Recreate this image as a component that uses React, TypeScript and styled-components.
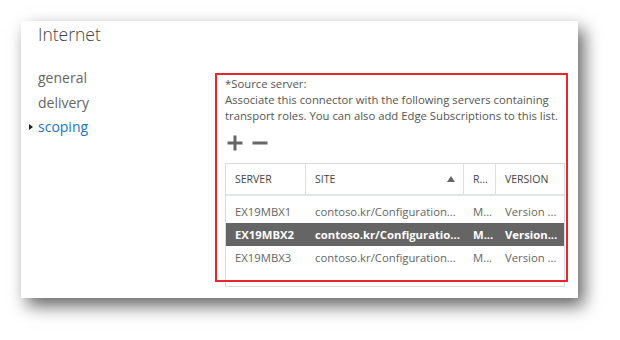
import React from "react";
import styled, { createGlobalStyle } from "styled-components";

const Global = createGlobalStyle`
  html, body { margin: 0; padding: 0; background: #ffffff; }
  body { font-family: "Open Sans", "Noto Sans", sans-serif; }
`;

const Page = styled.div`
  width: 620px;
  height: 340px;
  padding: 21px 0 0 21px;
  box-sizing: border-box;
  overflow: hidden;
`;

const Card = styled.div`
  width: 557px;
  height: 277px;
  background: #fff;
  box-shadow: 6px 8px 16px rgba(0, 0, 0, 0.6);
  padding: 1px 0 0 17px;
  box-sizing: border-box;
  display: flex;
  flex-direction: column;
`;

const Title = styled.div`
  font-size: 17.5px;
  font-weight: 300;
  line-height: 24px;
  color: #444;
`;

const Body = styled.div`
  display: flex;
  align-items: flex-start;
  margin-top: 20px;
`;

const Nav = styled.ul`
  list-style: none;
  margin: 0;
  padding: 0;
  width: 177px;
  flex: none;
`;

const NavItem = styled.li<{ $active?: boolean }>`
  position: relative;
  font-size: 14px;
  line-height: 24.5px;
  color: ${(p) => (p.$active ? "#1a74c4" : "#666")};
  &::before {
    content: "";
    display: ${(p) => (p.$active ? "block" : "none")};
    position: absolute;
    left: -9px;
    top: 9px;
    border-left: 4px solid #222;
    border-top: 3.5px solid transparent;
    border-bottom: 3.5px solid transparent;
  }
`;

const Section = styled.div`
  position: relative;
  width: 353px;
  margin-top: 7px;
  padding: 3px 0 0 10px;
  box-sizing: border-box;
  color: #555;
  font-size: 11.3px;
  line-height: 16px;
`;

const Highlight = styled.div`
  position: absolute;
  left: 0;
  top: 0;
  width: 353px;
  height: 209px;
  border: 2px solid #e8262c;
  box-sizing: border-box;
  pointer-events: none;
`;

const Para = styled.p`
  margin: 0;
`;

const Tools = styled.div`
  display: flex;
  align-items: center;
  gap: 9px;
  height: 22px;
  margin-top: 8px;
  padding-left: 2px;
`;

const Table = styled.div`
  width: 340px;
  margin-top: 9px;
  border: 1px solid #d9dcdf;
  box-sizing: border-box;
  padding-bottom: 17px;
`;

const Grid = styled.div<{ $head?: boolean; $selected?: boolean }>`
  display: grid;
  grid-template-columns: 80px 158px 32px 1fr;
  height: ${(p) => (p.$head ? "30px" : "23px")};
  align-items: center;
  background: ${(p) => (p.$selected ? "#656565" : "transparent")};
  color: ${(p) => (p.$selected ? "#fff" : p.$head ? "#444" : "#666")};
  font-weight: ${(p) => (p.$selected ? 700 : 400)};
  font-size: ${(p) => (p.$head ? "10.5px" : "11.3px")};
  border-bottom: ${(p) => (p.$head ? "2px solid #e3e6e9" : "none")};
  margin-bottom: ${(p) => (p.$head ? "4px" : "0")};
`;

const Cell = styled.div<{ $head?: boolean }>`
  height: 100%;
  display: flex;
  align-items: center;
  justify-content: space-between;
  padding: 0 8px 0 9px;
  white-space: nowrap;
  overflow: hidden;
  box-sizing: border-box;
  border-right: ${(p) => (p.$head ? "1px solid #dcdfe2" : "none")};
  &:last-child { border-right: none; }
`;

const SortUp = styled.span`
  width: 0;
  height: 0;
  border-left: 4px solid transparent;
  border-right: 4px solid transparent;
  border-bottom: 6px solid #666;
`;

const Plus = () => (
  <svg width="16" height="16" viewBox="0 0 16 16">
    <path d="M8 0.5v15M0.5 8h15" stroke="#666" strokeWidth="3" />
  </svg>
);
const Minus = () => (
  <svg width="16" height="16" viewBox="0 0 16 16">
    <path d="M0.5 8h15" stroke="#666" strokeWidth="3" />
  </svg>
);

const rows = [
  { server: "EX19MBX1", site: "contoso.kr/Configuration...", r: "M...", v: "Version ..." },
  { server: "EX19MBX2", site: "contoso.kr/Configuratio...", r: "M...", v: "Version...", sel: true },
  { server: "EX19MBX3", site: "contoso.kr/Configuration...", r: "M...", v: "Version ..." },
];

export default function App() {
  return (
    <>
      <Global />
      <Page>
        <Card>
          <Title>Internet</Title>
          <Body>
            <Nav>
              <NavItem>general</NavItem>
              <NavItem>delivery</NavItem>
              <NavItem $active>scoping</NavItem>
            </Nav>
            <Section>
              <Para>*Source server:</Para>
              <Para>
                Associate this connector with the following servers containing transport roles. You can also add Edge
                Subscriptions to this list.
              </Para>
              <Tools>
                <Plus />
                <Minus />
              </Tools>
              <Table>
                <Grid $head>
                  <Cell $head>SERVER</Cell>
                  <Cell $head>
                    SITE
                    <SortUp />
                  </Cell>
                  <Cell $head>R...</Cell>
                  <Cell $head>VERSION</Cell>
                </Grid>
                {rows.map((r) => (
                  <Grid key={r.server} $selected={r.sel}>
                    <Cell>{r.server}</Cell>
                    <Cell>{r.site}</Cell>
                    <Cell>{r.r}</Cell>
                    <Cell>{r.v}</Cell>
                  </Grid>
                ))}
              </Table>
              <Highlight />
            </Section>
          </Body>
        </Card>
      </Page>
    </>
  );
}
